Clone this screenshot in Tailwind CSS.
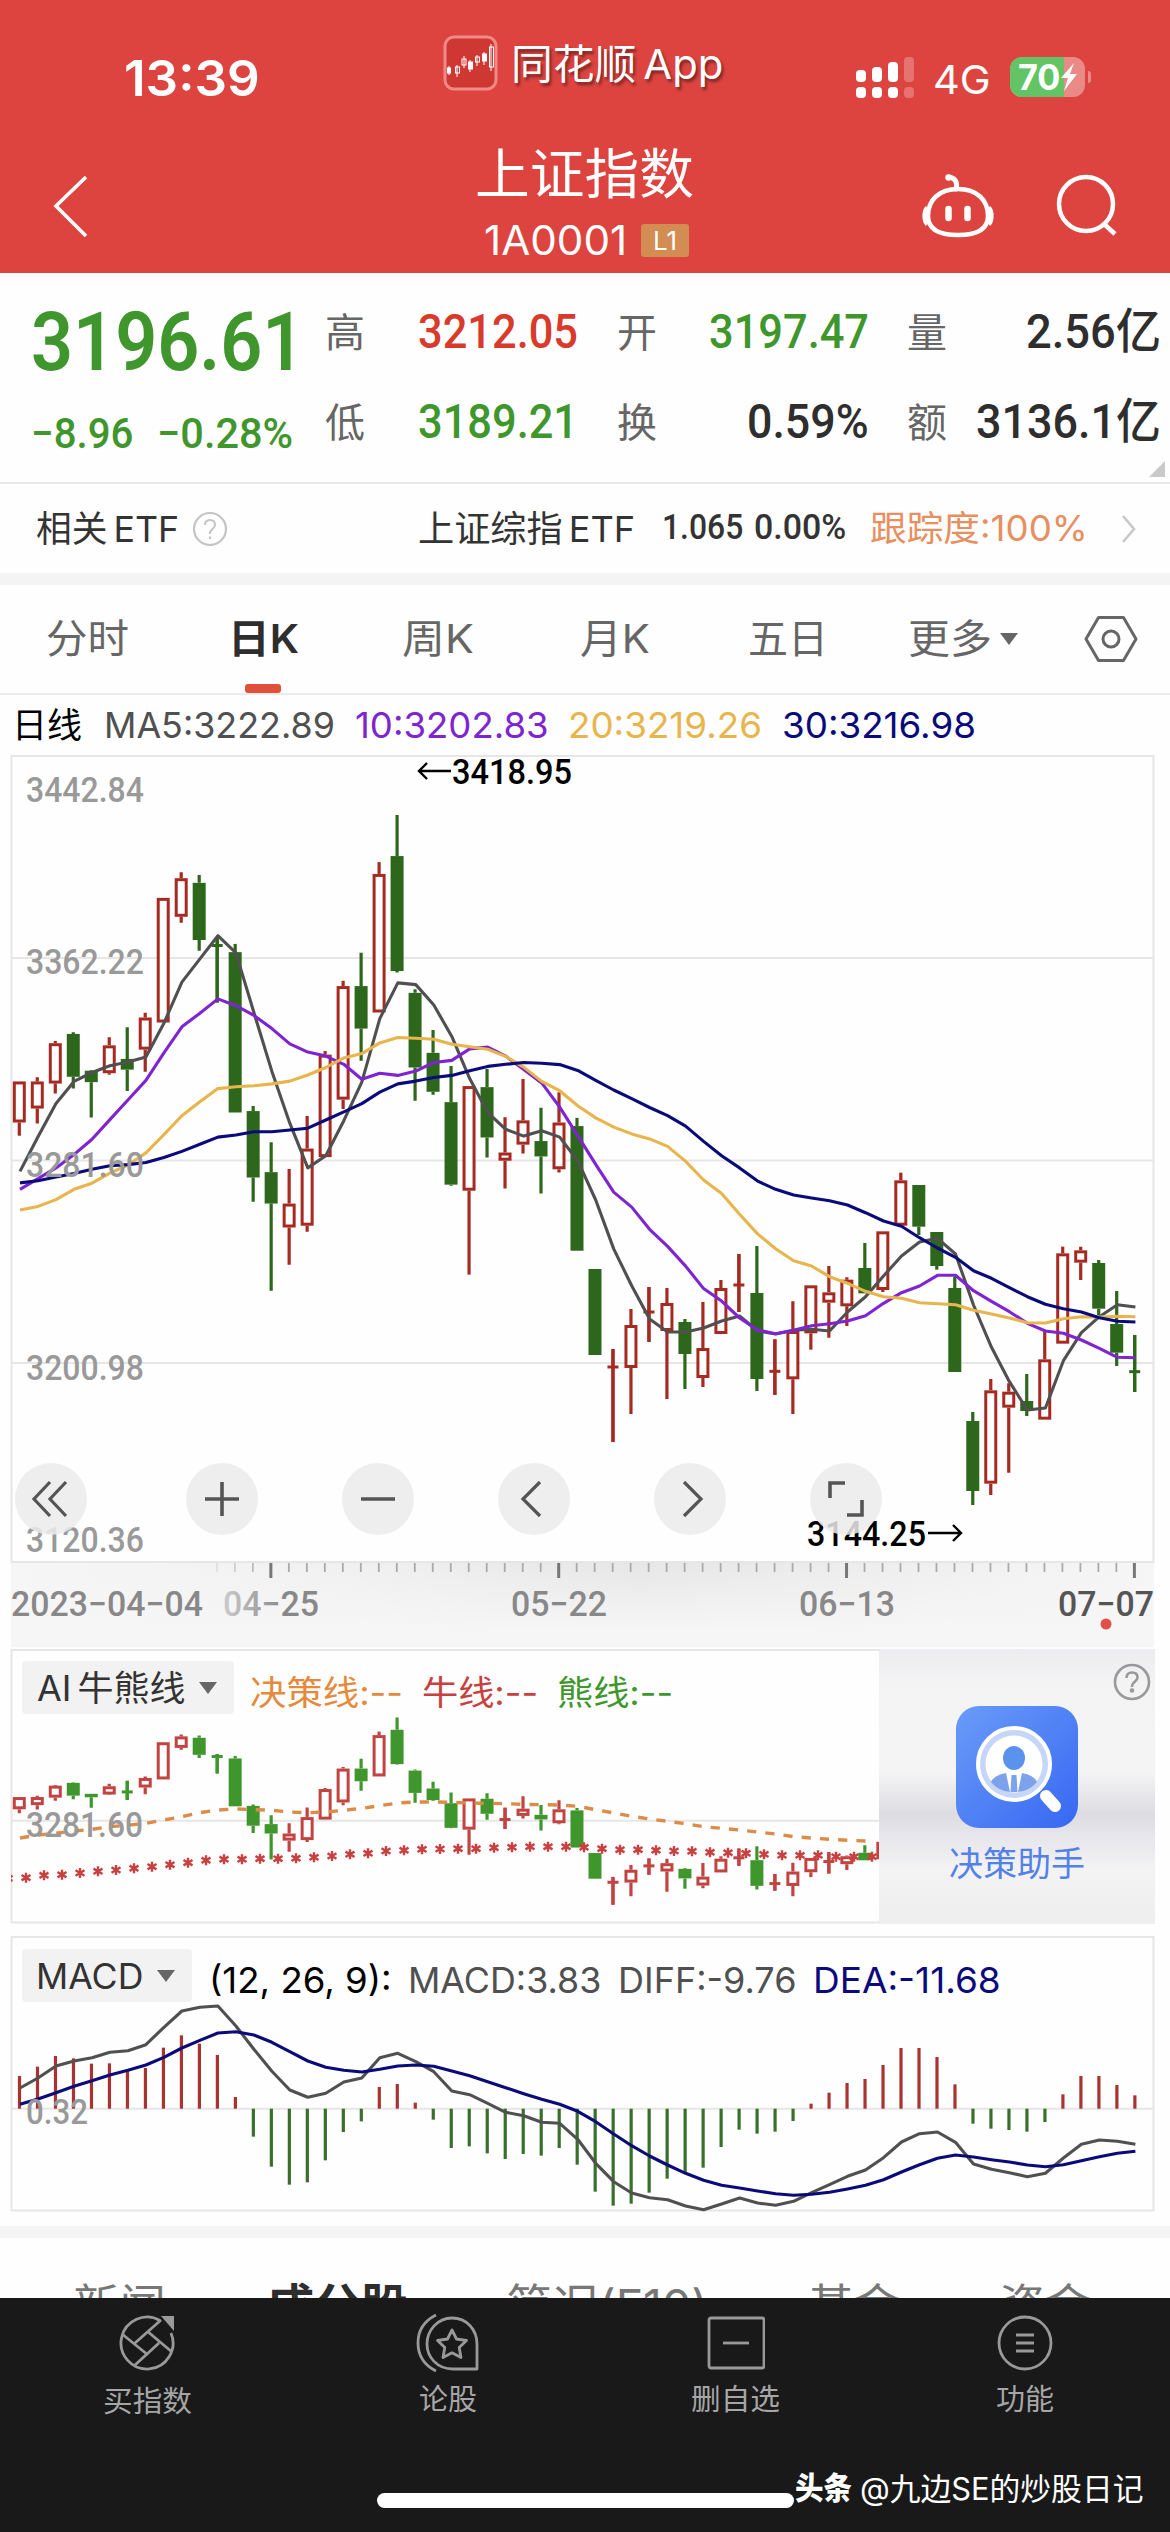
<!DOCTYPE html>
<html lang="zh-CN">
<head>
<meta charset="utf-8">
<title>上证指数</title>
<script src="https://cdn.jsdelivr.net/npm/@tailwindcss/browser@4"></script>
</head>
<body class="bg-white font-['Inter','Noto_Sans_CJK_SC',sans-serif] text-[#333]">
<div class="w-[1170px] h-[2532px] overflow-hidden flex flex-col bg-[#fefefe]">

  <header class="h-[273px] shrink-0 bg-[#dd4440] text-white flex flex-col">
    <div class="h-[120px] flex items-start">
      <span class="ml-[124px] mt-[51px] text-[50px] leading-[54px] font-semibold" data-w="136">13:39</span>
      <svg class="ml-[183px] mt-[35px] shrink-0" width="56" height="56" viewBox="0 0 56 56">
        <rect x="2" y="2" width="51" height="52" rx="9" fill="#cf3832" stroke="#f08a85" stroke-width="3"/>
        <path d="M6 31v9M14 30v12M21 21v12M27 25v12M34 20v11M41 17v13M48 9v27" stroke="#fff" stroke-width="1"/>
        <g stroke="#fff" stroke-width="1"><rect x="4.500" y="33" width="3" height="5" fill="#fff"/><rect x="12.500" y="32" width="4" height="6" fill="none"/><rect x="19" y="24" width="4" height="6" fill="none"/><rect x="25.500" y="27" width="4" height="7" fill="#fff"/><rect x="32.500" y="22" width="4" height="5" fill="none"/><rect x="39.500" y="19" width="4" height="7" fill="#fff"/><rect x="46.500" y="12" width="4" height="20" fill="none"/></g>
      </svg>
      <span class="ml-[12px] mt-[34px] text-[41px] leading-[60px] [text-shadow:2px_3px_3px_rgba(0,0,0,.45)]" data-w="212">同花顺&#8198;App</span>
      <svg class="ml-[133px] mt-[56px] shrink-0" width="60" height="44" viewBox="0 0 60 44" fill="#fff">
        <rect x="0" y="14" width="10" height="12" rx="4"/><rect x="16" y="11" width="10" height="15" rx="4"/><rect x="32" y="6" width="10" height="20" rx="4"/><rect x="48" y="1" width="10" height="25" rx="4" opacity=".25"/>
        <rect x="0" y="31" width="10" height="11" rx="4"/><rect x="16" y="31" width="10" height="11" rx="4"/><rect x="32" y="31" width="10" height="11" rx="4"/><rect x="48" y="31" width="10" height="11" rx="4" opacity=".25"/>
      </svg>
      <span class="ml-[17px] mt-[55px] text-[40px] leading-[50px]" data-w="58">4G</span>
      <div class="ml-[19px] mt-[57px] flex items-center">
        <div class="relative w-[75px] h-[40px] rounded-[12px] overflow-hidden bg-[#ea8a87]">
          <div class="absolute inset-y-0 left-0 w-[54px] bg-[#63c466]"></div>
          <div class="relative flex items-center h-full pl-[8px]">
            <span class="text-[35px] font-bold leading-[40px]" data-w="42">70</span>
            <svg width="18" height="30" viewBox="0 0 18 30" fill="#fff"><path d="M14 1L1 16h7l-4 13L17 12h-7z"/></svg>
          </div>
        </div>
        <div class="w-[3px] h-[12px] ml-[3px] rounded-r bg-[#ea8a87]"></div>
      </div>
    </div>
    <div class="h-[153px] flex items-start">
      <svg class="ml-[53px] mt-[54px] shrink-0" width="36" height="64" viewBox="0 0 36 64" fill="none" stroke="#fff" stroke-width="3.600"><path d="M33 3L3 32l30 30"/></svg>
      <div class="ml-[386px] w-[220px] flex flex-col">
        <div class="mt-[23px] text-[54px] leading-[64px]" data-w="219">上证指数</div>
        <div class="flex items-center mt-[14px] ml-[9px] h-[38px]">
          <span class="text-[41px] leading-[38px]" data-w="143">1A0001</span>
          <span class="ml-[14px] w-[48px] h-[33px] bg-[#d38c52] rounded-[3px] text-[26px] leading-[33px] text-center">L1</span>
        </div>
      </div>
      <svg class="ml-[225px] mt-[51px] shrink-0" width="76" height="68" viewBox="0 0 76 68" fill="none" stroke="#fff" stroke-width="4.500">
        <path d="M38 18C19 18 8 29 8 45c0 13 10 19 30 19s30-6 30-19C68 29 57 18 38 18z"/>
        <path d="M7.500 37c-3.500 3-3.500 13 0 16M68.500 37c3.500 3 3.500 13 0 16" stroke-width="5"/>
        <path d="M36 18c2-7-1-11-7-12" stroke-width="5" stroke-linecap="round"/>
        <circle cx="28.500" cy="6.500" r="3.200" fill="#fff" stroke="none"/>
        <path d="M28.500 38v9M47.500 38v9" stroke-width="6.500" stroke-linecap="round"/>
      </svg>
      <svg class="ml-[58px] mt-[52px] shrink-0" width="66" height="68" viewBox="0 0 66 68" fill="none" stroke="#fff" stroke-width="4.500"><circle cx="32" cy="32" r="27"/><path d="M50 52l11 10"/></svg>
    </div>
  </header>

  <section class="h-[211px] shrink-0 flex border-b-2 border-[#e9e9e9] font-['Roboto','Noto_Sans_CJK_SC',sans-serif] font-medium">
    <div class="ml-[31px] w-[294px] flex flex-col text-[#3f962d]">
      <span class="mt-[24px] text-[82px] leading-[90px] font-semibold" data-w="273">3196.61</span>
      <div class="flex mt-[24px] text-[43px] leading-[44px]">
        <span data-w="102">−8.96</span><span class="ml-[24px]" data-w="136">−0.28%</span>
      </div>
    </div>
    <div class="grid grid-cols-[292px_290px_252px] grid-rows-[90px_90px] mt-[14px] text-[48px] leading-[90px] text-[#2e2e2e]">
      <div class="flex"><span class="text-[40px] leading-[94px] font-normal text-[#666]" data-w="40">高</span><span class="ml-[53px] text-[#d83a2b]" data-w="160">3212.05</span></div>
      <div class="flex"><span class="text-[40px] leading-[94px] font-normal text-[#666]" data-w="40">开</span><span class="ml-[52px] text-[#3f962d]" data-w="160">3197.47</span></div>
      <div class="flex"><span class="text-[40px] leading-[94px] font-normal text-[#666]" data-w="40">量</span><span class="ml-[79px]" data-w="135">2.56亿</span></div>
      <div class="flex"><span class="text-[40px] leading-[94px] font-normal text-[#666]" data-w="40">低</span><span class="ml-[53px] text-[#3f962d]" data-w="160">3189.21</span></div>
      <div class="flex"><span class="text-[40px] leading-[94px] font-normal text-[#666]" data-w="40">换</span><span class="ml-[90px]" data-w="122">0.59%</span></div>
      <div class="flex relative"><span class="text-[40px] leading-[94px] font-normal text-[#666]" data-w="40">额</span><span class="ml-[29px]" data-w="185">3136.1亿</span>
        <svg class="absolute left-[242px] top-[84px]" width="16" height="16"><path d="M16 0v16H0z" fill="#c9c9c9"/></svg></div>
    </div>
  </section>

  <section class="h-[89px] shrink-0 flex items-center text-[36px] text-[#333]">
    <span class="ml-[36px]" data-w="143">相关&#8198;ETF</span>
    <svg class="ml-[13px] shrink-0" width="36" height="36" viewBox="0 0 36 36" fill="none" stroke="#c4c4c4" stroke-width="2.200"><circle cx="18" cy="18" r="16"/><path d="M13 14c0-3 2-5 5-5s5 2 5 5c0 4-5 4-5 8v1" stroke-width="2"/><path d="M18 25.500v2.500"/></svg>
    <span class="ml-[190px]" data-w="217">上证综指&#8198;ETF</span>
    <span class="ml-[27px] text-[35px] font-['Roboto'] font-medium" data-w="81">1.065</span>
    <span class="ml-[11px] text-[35px] font-['Roboto'] font-medium" data-w="92">0.00%</span>
    <span class="ml-[24px] text-[#e78f60] text-[35px]" data-w="218">跟踪度:100%</span>
    <svg class="ml-[33px] shrink-0" width="16" height="30" viewBox="0 0 16 30" fill="none" stroke="#c8c8c8" stroke-width="2.600"><path d="M2 2l11 13L2 28"/></svg>
  </section>
  <div class="h-[12px] shrink-0 bg-[#f4f4f4]"></div>

  <nav class="h-[110px] shrink-0 flex items-center border-b-2 border-[#ebebeb] text-[40px] leading-[62px] text-[#666]">
    <span class="ml-[46px]" data-w="83">分时</span>
    <div class="relative ml-[99px] font-semibold text-[#2e2e2e]"><span data-w="71">日K</span><i class="absolute left-[17px] top-[76px] w-[36px] h-[9px] rounded-[3px] bg-[#e0503a]"></i></div>
    <span class="ml-[103px]" data-w="72">周K</span>
    <span class="ml-[106px]" data-w="70">月K</span>
    <span class="ml-[98px]" data-w="80">五日</span>
    <span class="ml-[80px]" data-w="84">更多</span>
    <svg class="ml-[7px] shrink-0" width="20" height="14"><path d="M1 1h18l-9 12z" fill="#666"/></svg>
    <svg class="ml-[65px] shrink-0" width="54" height="48" viewBox="0 0 54 48" fill="none" stroke="#666" stroke-width="3"><path d="M14.500 2.500h25L52 24 39.500 45.500h-25L2 24z" stroke-linejoin="round"/><circle cx="27" cy="24" r="8"/></svg>
  </nav>

  <div class="h-[60px] shrink-0 flex items-center text-[36px]">
    <span class="ml-[12px] text-[35px] text-black" data-w="70">日线</span>
    <span class="ml-[22px] text-[#505050]" data-w="231">MA5:3222.89</span>
    <span class="ml-[20px] text-[#7e24d0]" data-w="194">10:3202.83</span>
    <span class="ml-[19px] text-[#e8b54c]" data-w="194">20:3219.26</span>
    <span class="ml-[20px] text-[#0a0a7a]" data-w="194">30:3216.98</span>
  </div>

  <div class="relative h-[892px] shrink-0">
    <svg id="kline" class="block" width="1170" height="892" viewBox="0 755 1170 892"></svg>
    <div class="absolute left-[15px] top-[708px] flex gap-[84px]">
      <button class="size-[72px] mr-[15px] rounded-full bg-[#ebebeb]/85 flex items-center justify-center"><svg width="40" height="40" viewBox="0 0 40 40" fill="none" stroke="#555" stroke-width="3.200"><path d="M19 3L3 20l16 17M35 3L19 20l16 17"/></svg></button>
      <button class="size-[72px] rounded-full bg-[#ebebeb]/85 flex items-center justify-center"><svg width="36" height="36" viewBox="0 0 36 36" fill="none" stroke="#555" stroke-width="3.600"><path d="M1 18h34M18 1v34"/></svg></button>
      <button class="size-[72px] rounded-full bg-[#ebebeb]/85 flex items-center justify-center"><svg width="36" height="36" viewBox="0 0 36 36" fill="none" stroke="#555" stroke-width="3.600"><path d="M1 18h34"/></svg></button>
      <button class="size-[72px] rounded-full bg-[#ebebeb]/85 flex items-center justify-center"><svg width="36" height="40" viewBox="0 0 36 40" fill="none" stroke="#555" stroke-width="3.200"><path d="M24 3L7 20l17 17"/></svg></button>
      <button class="size-[72px] rounded-full bg-[#ebebeb]/85 flex items-center justify-center"><svg width="36" height="40" viewBox="0 0 36 40" fill="none" stroke="#555" stroke-width="3.200"><path d="M12 3l17 17-17 17"/></svg></button>
      <button class="size-[72px] rounded-full bg-[#ebebeb]/85 flex items-center justify-center"><svg width="40" height="40" viewBox="0 0 40 40" fill="none" stroke="#555" stroke-width="3.600"><path d="M4 19V4h15M21 36h15V21"/></svg></button>
    </div>
  </div>

  <section class="relative mt-[2px] h-[276px] shrink-0">
    <svg id="bull" class="absolute inset-0" width="1170" height="276" viewBox="0 1649 1170 276"></svg>
    <div class="relative flex items-start text-[34px] leading-[50px]">
      <div class="ml-[22px] mt-[12px] w-[212px] h-[53px] flex items-center bg-[#f2f2f2] rounded-[4px]">
        <span class="ml-[15px] text-[35px]" data-w="148">AI&#8198;牛熊线</span>
        <svg class="ml-[13px] shrink-0" width="20" height="14"><path d="M1 1h18l-9 12z" fill="#666"/></svg>
      </div>
      <span class="ml-[16px] mt-[19px] text-[#e58a3c]" data-w="153">决策线:--</span>
      <span class="ml-[19px] mt-[19px] text-[#c8403f]" data-w="116">牛线:--</span>
      <span class="ml-[19px] mt-[19px] text-[#3f962d]" data-w="116">熊线:--</span>
      <div class="ml-[206px] h-[275px] w-[276px] shrink-0 flex flex-col items-center relative bg-[linear-gradient(180deg,#ececf0_0%,#f3f3f4_12%,#f4f4f5_45%,#dcdce2_60%,#e6e6ec_68%,#f3f3f3_80%,#eeeeee_100%)]">
        <svg class="mt-[57px]" width="122" height="122" viewBox="0 0 122 122">
          <defs><linearGradient id="bl" x1="0" y1="0" x2="1" y2="1"><stop offset="0" stop-color="#6a9cf8"/><stop offset="1" stop-color="#3767f2"/></linearGradient></defs>
          <rect width="122" height="122" rx="23" fill="url(#bl)"/>
          <circle cx="58" cy="58" r="36" fill="#c6d6f8" stroke="#fff" stroke-width="4"/>
          <circle cx="58" cy="58" r="28.500" fill="#fff"/>
          <ellipse cx="58" cy="52" rx="11" ry="12" fill="#5b92ee"/>
          <path d="M35 76c2-5 9-8 15-9l4 19c-9-1-15-5-19-10zM81 76c-2-5-9-8-15-9l-4 19c9-1 15-5 19-10zM55.500 69h5l1 17h-7z" fill="#7ba2ea"/>
          <path d="M90 90l9 10" stroke="#fff" stroke-width="12" stroke-linecap="round"/>
        </svg>
        <span class="mt-[11px] text-[34px] leading-[50px] text-[#5282e8]" data-w="136">决策助手</span>
        <svg class="absolute left-[234px] top-[14px]" width="38" height="38" viewBox="0 0 38 38" fill="none" stroke="#999" stroke-width="2.600"><circle cx="19" cy="19" r="17"/><path d="M13.500 15c0-3.500 2-5.500 5.500-5.500s5.500 2 5.500 5c0 4-5.500 4.500-5.500 8.500v1"/><circle cx="19" cy="27.500" r="1" /></svg>
      </div>
    </div>
  </section>

  <section class="relative mt-[11px] h-[290px] shrink-0">
    <svg id="macd" class="absolute inset-0" width="1170" height="290" viewBox="0 1936 1170 290"></svg>
    <div class="relative flex items-start text-[36px] leading-[54px]">
      <div class="ml-[22px] mt-[13px] w-[170px] h-[53px] flex items-center bg-[#f2f2f2] rounded-[4px]">
        <span class="ml-[14px] text-[35px]" data-w="107">MACD</span>
        <svg class="ml-[13px] shrink-0" width="20" height="14"><path d="M1 1h18l-9 12z" fill="#666"/></svg>
      </div>
      <span class="ml-[17px] mt-[17px] text-black" data-w="183">(12, 26, 9):</span>
      <span class="ml-[16px] mt-[17px] text-[#505050]" data-w="193">MACD:3.83</span>
      <span class="ml-[17px] mt-[17px] text-[#505050]" data-w="179">DIFF:-9.76</span>
      <span class="ml-[16px] mt-[17px] text-[#0a0a7a]" data-w="188">DEA:-11.68</span>
    </div>
  </section>
  <div class="h-[12px] shrink-0 bg-[#f4f4f4]"></div>

  <nav class="h-[60px] shrink-0 overflow-hidden flex items-start text-[45px] leading-[60px] text-[#777]">
    <span class="ml-[73px] mt-[38px]" data-w="93">新闻</span>
    <span class="ml-[101px] mt-[38px] font-bold text-[#2e2e2e]" data-w="141">成分股</span>
    <span class="ml-[98px] mt-[38px]" data-w="202">简况(F10)</span>
    <span class="ml-[100px] mt-[38px]" data-w="92">基金</span>
    <span class="ml-[99px] mt-[38px]" data-w="92">资金</span>
  </nav>

  <footer class="grow bg-[#191919] text-[#a6a6a6] flex flex-col">
    <div class="flex text-[29px] leading-[40px] h-[130px]">
      <div class="ml-[96px] w-[102px] flex flex-col items-center">
        <svg class="mt-[15px]" width="60" height="60" viewBox="0 0 60 60" fill="none" stroke="#999" stroke-width="2.800"><path d="M43 7.500A26 26 0 1 0 54 20"/><path d="M44 7L18 30M42 30L18 52M5 21l26 21M30 18l25 21"/><path d="M44 3h13v15z" fill="#999" stroke="none"/></svg>
        <span class="mt-[9px]" data-w="89">买指数</span>
      </div>
      <div class="ml-[195px] w-[110px] flex flex-col items-center">
        <svg class="mt-[15px]" width="64" height="60" viewBox="0 0 64 60" fill="none" stroke="#999" stroke-width="2.800"><path d="M61 56H37C21 56 11 44 11 31S21 5 36 5s25 12 25 26z" stroke-linejoin="round"/><path d="M20 2C8 8 2 18 2 30s6 22 18 28"/><path d="M36 17l4.500 9 10 1.500-7.300 7 1.800 10-9-4.700-9 4.700 1.800-10-7.300-7 10-1.500z" stroke-linejoin="round"/></svg>
        <span class="mt-[7px]" data-w="58">论股</span>
      </div>
      <div class="ml-[177px] w-[110px] flex flex-col items-center">
        <svg class="mt-[15px]" width="60" height="60" viewBox="0 0 60 60" fill="none" stroke="#999" stroke-width="2.800"><rect x="4" y="5" width="55" height="50" rx="2"/><path d="M18 30h26"/></svg>
        <span class="mt-[7px]" data-w="89">删自选</span>
      </div>
      <div class="ml-[180px] w-[110px] flex flex-col items-center">
        <svg class="mt-[15px]" width="60" height="60" viewBox="0 0 60 60" fill="none" stroke="#999" stroke-width="2.800"><circle cx="30" cy="30" r="26"/><path d="M21 22h18M21 30h18M21 38h18"/></svg>
        <span class="mt-[7px]" data-w="58">功能</span>
      </div>
    </div>
    <div class="flex h-[104px] items-start text-white text-[31px] leading-[44px]">
      <div class="ml-[377px] mt-[65px] w-[417px] h-[15px] shrink-0 rounded-full bg-white"></div>
      <span class="ml-[1px] mt-[38px] font-black" data-w="57">头条</span>
      <span class="ml-[8px] mt-[39px]" data-w="283">@九边SE的炒股日记</span>
    </div>
  </footer>
</div>

<script>
// Squeeze or stretch each label to the column width it is given,
// again whenever its natural size changes (styles or fonts arriving late).
const fit = inner => {
  const n = inner.offsetWidth;
  if (n) inner.style.transform = `scaleX(${inner.parentNode.dataset.w / n})`;
};
const watcher = new ResizeObserver(entries => entries.forEach(e => fit(e.target)));
document.querySelectorAll('[data-w]').forEach(el => {
  const inner = document.createElement('span');
  inner.textContent = el.textContent;
  inner.style.cssText = 'display:inline-block;white-space:pre;transform-origin:0 50%';
  el.textContent = '';
  el.appendChild(inner);
  el.style.cssText = `display:block;flex-shrink:0;white-space:nowrap;width:${el.dataset.w}px`;
  watcher.observe(inner);
});
const fitAll = () => document.querySelectorAll('[data-w] > span').forEach(fit);
addEventListener('load', fitAll);
document.fonts.ready.then(fitAll);

const X = i => 19 + 17.99 * i;
const a = v => 750 + v / 2.8, b = v => 1130 + v / 3, p = v => v;
const map = (f, rows) => rows.map(r => Array.isArray(r) ? [r[0], ...r.slice(1).map(f)] : f(r));

// direction, high, body top, body bottom, low
const candles = [
  ...map(a, [['r',928,928,1043,1080],['r',916,928,1004,1046],['r',815,821,934,962],['g',790,795,915,948],['g',896,898,930,1029],['r',804,827,905,909],['g',776,865,895,955],['r',736,749,839,901],['r',414,414,763,763],['r',342,359,467,484],['g',350,372,532,562],['g',525,545,550,707],['g',543,566,1015,1015],['g',997,1011,1197,1265],['g',1098,1182,1270,1514],['r',1173,1270,1337,1441],['r',1025,1116,1332,1349],['r',843,853,1140,1140],['r',646,661,979,1005],['g',568,661,780,870],['r',314,347,735,735],['g',182,297,619,623],['g',670,680,889,982],['g',784,848,957,965],['g',885,986,1217,1220],['r',941,941,1234,1469],['g',893,944,1085,1141],['r',1028,1127,1150,1228],['r',921,1037,1105,1130],['g',1002,1095,1138,1242],['r',958,1043,1174,1183],['g',1030,1053,1402,1402]]),
  ...map(p, [['g',1269,1269,1355,1355],['r',1349,1366,1368,1442],['r',1309,1325,1368,1414],['r',1287,1311,1313,1342],['r',1288,1303,1331,1399],['g',1319,1322,1354,1389],['r',1302,1348,1378,1387],['r',1280,1288,1334,1334],['r',1254,1284,1286,1312],['g',1246,1293,1379,1391]]),
  ...map(b, [['r',628,721,727,795],['r',514,603,748,852],['r',466,466,610,659],['r',408,487,518,623],['r',442,449,529,588],['g',339,414,490,490],['r',304,304,480,486],['r',128,151,287,287],['g',165,165,290,315],['g',306,306,408,419],['g',440,474,726,726],['g',846,873,1083,1125],['r',747,781,1061,1095],['r',760,785,833,1028],['g',732,813,843,858],['r',600,688,869,869],['r',350,370,641,641],['r',350,361,398,450],['g',390,399,536,555],['g',483,582,668,708],['g',615,722,728,786]])
];
const ma5 = [...map(a,[1180,1083,990,928,903,884,874,860,765,650,585,520,568,735,900,1045,1170,1136,1038,930,752,652,657,714,802,920,1015,1062,1081,1066,1084,1150,1260,1397,1500,1593]),...[1332,1332,1328,1321,1316,1331,1334],...map(b,[601,598,603,546,500,438,378,336,325,372,525,652,755,840,834,692,608,560,524,531])];
const ma10 = [...map(a,[1230,1200,1170,1133,1090,1035,980,925,848,775,737,697,716,743,780,823,846,857,880,922,905,911,899,875,869,837,832,857,895,932,1000,1080,1160,1238,1280,1342,1390,1445,1508,1543]),1318,1330,...map(b,[611,601,587,581,573,557,520,488,468,436,436,482,514,545,580,603,610,630,655,682,683])];
const ma20 = [...map(a,[1288,1278,1259,1230,1213,1185,1162,1128,1077,1024,985,948,943,940,935,927,910,889,862,850,820,805,807,810,824,831,838,858,888,928,954,996,1030,1056,1075,1089,1110,1152,1204,1242,1300,1355]),...map(b,[356,392,408,440,460,484,500,505,518,521,524,541,552,564,578,579,566,560,561,559,560])];
const ma30 = [...map(a,[1212,1206,1196,1186,1174,1164,1161,1155,1141,1124,1104,1084,1078,1069,1069,1064,1059,1036,1013,990,958,935,927,917,911,898,886,880,875,877,881,897,925,952,976,1001,1024,1053,1096,1136,1170,1207]),...map(b,[178,195,204,212,225,248,273,289,323,354,382,422,445,473,500,523,536,546,563,574,576])];

const line = (ys, c, w = 3.1, extra = '') => `<polyline fill="none" stroke="${c}" stroke-width="${w}" stroke-linejoin="round" ${extra} points="${ys.map((y, i) => (X(i) + 1).toFixed(1) + ',' + y.toFixed(1)).join(' ')}"/>`;
const grid = d => `<path d="${d}" fill="none" stroke="#e6e6e6" stroke-width="2"/>`;
const label = (x, y, w, t, c = '#999', wt = 500, s = 35) => `<text x="${x}" y="${y}" textLength="${w}" lengthAdjust="spacingAndGlyphs" font-family="Roboto" font-weight="${wt}" font-size="${s}" fill="${c}">${t}</text>`;
function stick(c, i, red, green, f) {
  const col = c[0] === 'r' ? red : green, x = X(i) + 0.3;
  const [h, t, bt, l] = c.slice(1).map(f);
  let s = `<path d="M${x} ${h}V${Math.max(t, h)}M${x} ${bt}V${l}" stroke="${col}" stroke-width="3.2"/>`;
  if (bt - t < 3.2) return s + `<path d="M${x} ${h}V${l}" stroke="${col}" stroke-width="3.2"/><path d="M${x - 5.5} ${(t + bt) / 2}h11" stroke="${col}" stroke-width="3"/>`;
  return s + (c[0] === 'g'
    ? `<rect x="${x - 6.5}" y="${t}" width="13" height="${bt - t}" fill="${col}"/>`
    : `<rect x="${x - 5}" y="${t + 1.5}" width="10" height="${Math.max(bt - t - 3, 1)}" fill="#fff" stroke="${col}" stroke-width="3"/>`);
}

let ticks = '';
for (let i = 11; i < 63; i++) {
  const major = i % 16 === 14;
  ticks += `<path d="M${X(i)} 1563v${major ? 15 : 9}" stroke="${major ? '#777' : '#aaa'}" stroke-width="${major ? 3 : 1.8}" opacity="${i < 14 ? (i - 10) * 0.25 : 1}"/>`;
}
document.getElementById('kline').innerHTML =
  `<defs><linearGradient id="ax" x1="0" x2="1" y1="0" y2="0"><stop offset="0" stop-color="#f6f6f6"/><stop offset=".3" stop-color="#f0f0f0"/><stop offset=".55" stop-color="#e6e6e6"/><stop offset="1" stop-color="#f6f6f6"/></linearGradient>
   <linearGradient id="ay" x1="0" x2="0" y1="0" y2="1"><stop offset="0" stop-color="#f6f6f6" stop-opacity="0"/><stop offset=".8" stop-color="#f6f6f6"/></linearGradient>
   <linearGradient id="fd" gradientUnits="userSpaceOnUse" x1="222" x2="285" y1="0" y2="0"><stop offset="0" stop-color="#ccc"/><stop offset="1" stop-color="#888"/></linearGradient></defs>
   <rect x="11" y="1563" width="1143" height="84" fill="url(#ax)"/><rect x="11" y="1563" width="1143" height="84" fill="url(#ay)"/>` +
  grid('M11.5 756H1153.500V1562H11.500ZM11 958H1153M11 1160.500H1153M11 1363H1153') + ticks +
  candles.map((c, i) => stick(c, i, '#a52a22', '#2d671b', p)).join('') +
  line(ma5, '#505050') + line(ma10, '#7e24d0') + line(ma20, '#e8b54c') + line(ma30, '#0a0a7a') +
  label(26, 802, 118, '3442.84') + label(26, 974, 118, '3362.22') + label(26, 1177, 118, '3281.60') + label(26, 1379.500, 118, '3200.98') + label(26, 1551.500, 118, '3120.36') +
  label(452, 784, 120, '3418.95', '#000') + label(807, 1546, 119, '3144.25', '#000') +
  `<path d="M451 771H419M427 763l-8 8 8 8M928 1533h33M953 1525l8 8-8 8" fill="none" stroke="#000" stroke-width="2.4"/>` +
  label(11, 1616, 192, '2023−04−04', '#888') + label(223, 1616, 96, '04−25', 'url(#fd)') + label(511, 1616, 96, '05−22', '#888') + label(799, 1616, 96, '06−13', '#888') + label(1058, 1616, 96, '07−07', '#555') +
  `<circle cx="1106" cy="1624" r="5.500" fill="#e0504a"/>`;

// Bull/bear panel: same candles, compressed.
const q = y => 1820.7 + (y - 1160.7) * 0.2985, u = v => 1640 + v / 3;
const stars = [715,713,706,704,699,694,690,685,680,674,668,661,658,658,656,656,655,652,648,643,640,633,631,628,627,626,626,623,622,620,620,620,622,626,629,629,631,633,634,637,638,640,643,646,646,646,650,650,650];
const decision = [594,585,580,573,568,560,556,550,540,530,518,510,507,509,511,516,518,516,511,505,497,489,486,486,487,489,490,491,493,494,495,499,509,519,529,537,544,551,560,565,570,576,582,590,594,598,601,603];
const star = (x, y) => `<path d="M${x} ${y - 5}v10M${x - 4.500} ${y - 2.700}l9 5.400M${x - 4.500} ${y + 2.700}l9 -5.400" stroke="#c8403f" stroke-width="2.400"/>`;
document.getElementById('bull').innerHTML =
  `<clipPath id="cl"><rect x="11" y="1649" width="868" height="276"/></clipPath>` +
  grid('M1153.500 1650H11.500V1922.500H1153.500M11 1820.700H879') +
  `<g clip-path="url(#cl)">` + candles.slice(0, 49).map((c, i) => stick(c, i, '#c24442', '#3f962d', q)).join('') +
  stars.map((v, k) => star(8 + 18 * k, u(v))).join('') +
  line(decision.map(u), '#dc8c48', 3.4, 'stroke-dasharray="9.2 9.1"') + `</g>` + label(26, 1836.500, 117, '3281.60');

// MACD panel
const m = v => 1930 + v / 3;
const bars = [438,410,378,385,401,400,420,414,353,316,341,375,501,620,710,764,757,691,606,574,471,462,518,569,654,649,670,687,672,677,654,704,785,827,821,788,746,730,713,651,599,611,605,573,521,488,459,447,405,354,354,381,463,581,596,600,605,576,493,438,438,465,496];
const diff = [474,444,408,393,383,367,362,344,292,243,232,228,288,358,424,480,502,490,456,444,383,370,395,425,483,494,520,547,557,577,580,628,700,755,789,803,809,828,839,822,804,819,826,814,788,764,739,720,683,636,611,606,637,702,718,728,740,730,684,643,630,634,643];
const dea = [523,507,488,469,452,435,421,405,382,354,331,309,305,315,337,365,393,412,421,426,418,408,405,409,423,437,455,473,491,508,523,544,575,612,647,678,705,730,751,766,774,783,791,796,793,787,777,766,749,726,704,685,675,681,689,696,705,710,704,692,680,670,664];
document.getElementById('macd').innerHTML =
  grid('M11.500 1937H1153.500V2210.500H11.500ZM11 2108.700H1153') +
  bars.map((v, i) => `<path d="M${X(i) + .5} 2108.700V${m(v)}" stroke="${v < 536 ? '#a93330' : '#386f2b'}" stroke-width="3.2"/>`).join('') +
  line(diff.map(m), '#505050') + line(dea.map(m), '#0a0a7a') + label(26, 2124, 62, '0.32');
</script>
</body>
</html>
